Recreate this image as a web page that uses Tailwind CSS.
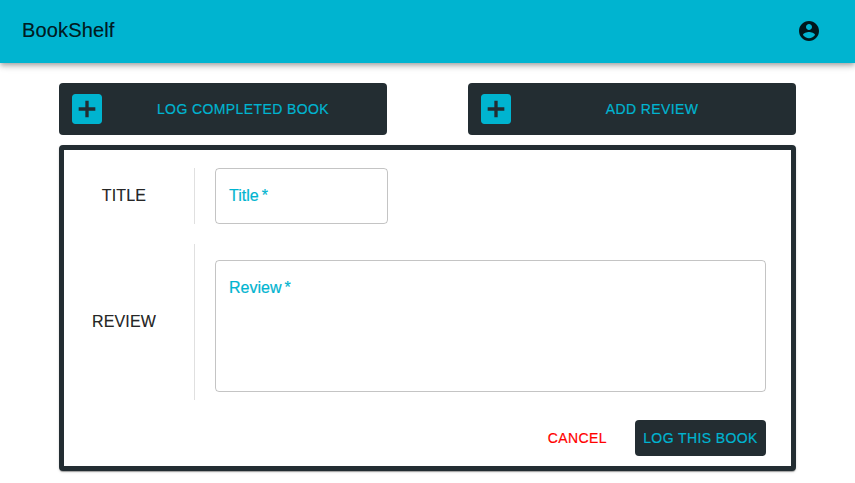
<!DOCTYPE html>
<html lang="en">
<head>
<meta charset="utf-8">
<title>BookShelf</title>
<script src="https://cdn.jsdelivr.net/npm/@tailwindcss/browser@4"></script>
</head>
<body class="h-[483px] overflow-hidden bg-white font-['Liberation_Sans',Arial,sans-serif] text-black/87 [-webkit-text-stroke:0.2px]">
<header class="flex h-[63px] items-center justify-between bg-[#00b4d0] pb-[2px] pl-[22px] pr-[34px] shadow-[0px_2px_4px_-1px_rgba(0,0,0,0.2),0px_4px_5px_0px_rgba(0,0,0,0.14),0px_1px_10px_0px_rgba(0,0,0,0.12)]">
  <h1 class="pb-[2px] text-[20px] leading-8 tracking-[0.15px]">BookShelf</h1>
  <button aria-label="Account"><svg class="size-6" viewBox="0 0 24 24" fill="currentColor"><path d="M12 2C6.48 2 2 6.48 2 12s4.48 10 10 10 10-4.48 10-10S17.52 2 12 2zm0 3c1.66 0 3 1.34 3 3s-1.34 3-3 3-3-1.34-3-3 1.34-3 3-3zm0 14.2c-2.5 0-4.71-1.28-6-3.22.03-1.99 4-3.08 6-3.08 1.99 0 5.97 1.09 6 3.08-1.29 1.94-3.5 3.22-6 3.22z"/></svg></button>
</header>
<main class="px-[59px] pt-5">
  <div class="flex justify-between">
    <button class="flex h-[52px] w-[328px] items-center rounded bg-[#232d32] px-2 text-sm tracking-[0.4px] text-[#00b4d0]">
      <svg class="size-10" viewBox="0 0 24 24" fill="currentColor"><path d="M19 3H5c-1.11 0-2 .9-2 2v14c0 1.1.89 2 2 2h14c1.1 0 2-.9 2-2V5c0-1.1-.9-2-2-2zm-2 10h-4v4h-2v-4H7v-2h4V7h2v4h4v2z"/></svg>
      <span class="flex-1">LOG COMPLETED BOOK</span>
    </button>
    <button class="flex h-[52px] w-[328px] items-center rounded bg-[#232d32] px-2 text-sm tracking-[0.4px] text-[#00b4d0]">
      <svg class="size-10" viewBox="0 0 24 24" fill="currentColor"><path d="M19 3H5c-1.11 0-2 .9-2 2v14c0 1.1.89 2 2 2h14c1.1 0 2-.9 2-2V5c0-1.1-.9-2-2-2zm-2 10h-4v4h-2v-4H7v-2h4V7h2v4h4v2z"/></svg>
      <span class="flex-1">ADD REVIEW</span>
    </button>
  </div>
  <form class="mt-[10px] h-[326px] rounded border-[5px] border-[#232d32] bg-white pr-[25px] pt-[18px] shadow-[0px_2px_1px_-1px_rgba(0,0,0,0.2),0px_1px_1px_0px_rgba(0,0,0,0.14),0px_1px_3px_0px_rgba(0,0,0,0.12)]">
    <div class="flex h-14">
      <div class="flex w-[131px] items-center justify-center border-r border-black/12 pb-px pl-[10px] pr-[20px] text-base tracking-[0.15px]">TITLE</div>
      <label class="ml-5 block h-14 w-[173px] rounded border border-black/23 px-[13px] pt-[15px] text-base leading-6 text-[#00b4d0]">Title<span class="ml-[3px]">*</span></label>
    </div>
    <div class="mt-5 flex h-[156px]">
      <div class="flex w-[131px] items-center justify-center border-r border-black/12 pb-px pl-[10px] pr-[20px] text-base tracking-[0.15px]">REVIEW</div>
      <label class="ml-5 mt-4 block h-[132px] flex-1 rounded border border-black/23 px-[13px] pt-[15px] text-base leading-6 text-[#00b4d0]">Review<span class="ml-[3px]">*</span></label>
    </div>
    <div class="mt-5 flex justify-end gap-5 text-sm tracking-[0.4px]">
      <button type="button" class="h-9 px-2 text-[#ff0000]">CANCEL</button>
      <button type="button" class="h-9 w-[131px] rounded bg-[#232d32] text-[#00b4d0]">LOG THIS BOOK</button>
    </div>
  </form>
</main>
</body>
</html>
